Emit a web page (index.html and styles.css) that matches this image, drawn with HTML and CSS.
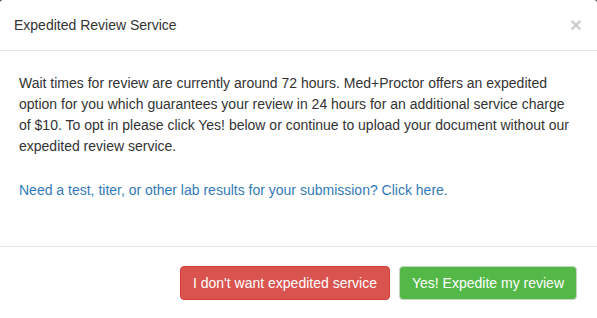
FILE: index.html
```html
<!DOCTYPE html>
<html lang="en">
<head>
<meta charset="utf-8">
<title>Expedited Review Service</title>
<link rel="stylesheet" href="styles.css">
</head>
<body>
<div class="modal">
  <div class="modal-header">
    <h4 class="modal-title">Expedited Review Service</h4>
    <button class="close" type="button" aria-label="Close">×</button>
  </div>
  <div class="modal-body">
    <p>Wait times for review are currently around 72 hours. Med+Proctor offers an expedited option for you which guarantees your review in 24 hours for an additional service charge of $10. To opt in please click Yes! below or continue to upload your document without our expedited review service.</p>
    <p class="last"><a href="#" class="lab-link">Need a test, titer, or other lab results for your submission? Click here.</a></p>
  </div>
  <div class="modal-footer">
    <button type="button" class="btn btn-danger">I don't want expedited service</button>
    <button type="button" class="btn btn-success">Yes! Expedite my review</button>
  </div>
</div>
</body>
</html>
```

FILE: styles.css
```css
html, body {
  margin: 0;
  padding: 0;
}
body {
  background: #3a3a3a;
  font-family: "Liberation Sans", Arial, sans-serif;
  font-size: 14px;
  color: #333;
  width: 597px;
  height: 318px;
  overflow: hidden;
}
.modal {
  background: #fff;
  height: 318px;
  border-top-left-radius: 3px;
  border-top-right-radius: 3px;
}
.modal-header {
  display: flex;
  align-items: flex-start;
  justify-content: space-between;
  padding: 15px 15px 15px 14px;
  border-bottom: 1px solid #e5e5e5;
  height: 20px;
}
.modal-title {
  margin: 0;
  font-size: 14px;
  font-weight: normal;
  line-height: 20px;
  color: #333;
}
.close {
  border: 0;
  background: none;
  padding: 0;
  margin: 0;
  font-family: "Liberation Sans", Arial, sans-serif;
  font-size: 21px;
  font-weight: bold;
  line-height: 20px;
  color: #000;
  opacity: 0.2;
  cursor: pointer;
}
.modal-body {
  padding: 22px 20px 22px 19px;
  line-height: 21px;
}
.modal-body p {
  margin: 0 0 23px;
}
.lab-link {
  color: #337ab7;
  text-decoration: none;
}
.modal-footer {
  border-top: 1px solid #e5e5e5;
  padding: 19px 20px;
  display: flex;
  justify-content: flex-end;
  gap: 9px;
}
.btn {
  font-family: "Liberation Sans", Arial, sans-serif;
  font-size: 14px;
  line-height: 20px;
  padding: 6px 12px;
  border: 1px solid transparent;
  border-radius: 4px;
  color: #fff;
  cursor: pointer;
}
.btn-danger {
  background: #d9534f;
  border-color: #d43f3a;
}
.btn-success {
  background: #54b848;
  border-color: #c4d4c0;
}
```
